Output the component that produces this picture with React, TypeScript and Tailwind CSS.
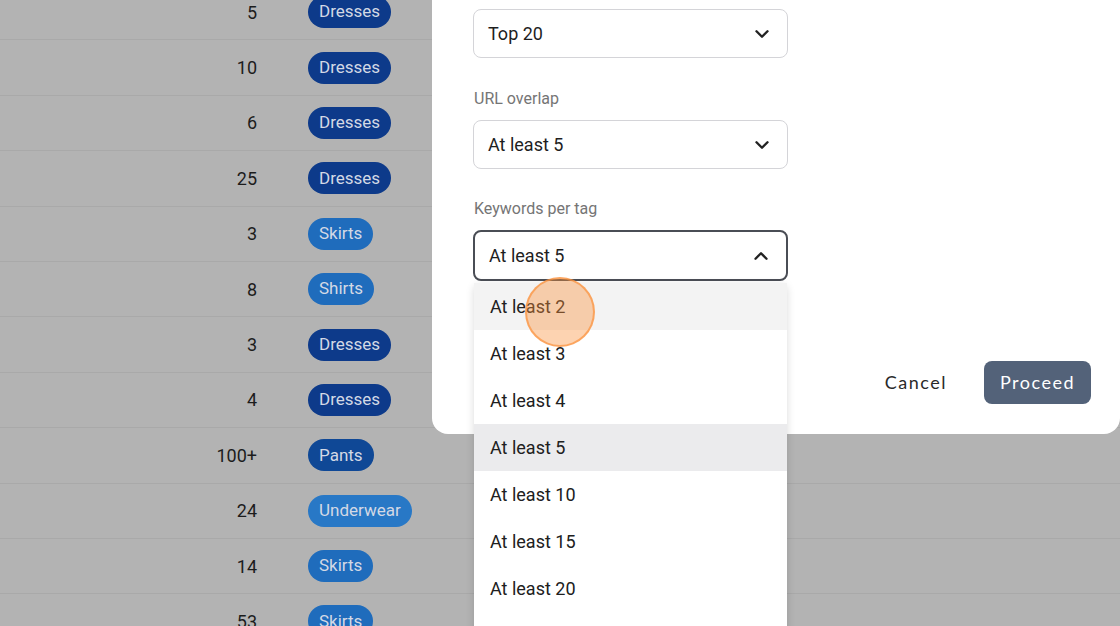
import React from 'react';
import {ChevronDown, ChevronUp} from "lucide-react";

type Row = { count: string, tag: string };

const rows: Row[] = [
    {count: "5", tag: "Dresses"},
    {count: "10", tag: "Dresses"},
    {count: "6", tag: "Dresses"},
    {count: "25", tag: "Dresses"},
    {count: "3", tag: "Skirts"},
    {count: "8", tag: "Shirts"},
    {count: "3", tag: "Dresses"},
    {count: "4", tag: "Dresses"},
    {count: "100+", tag: "Pants"},
    {count: "24", tag: "Underwear"},
    {count: "14", tag: "Skirts"},
    {count: "53", tag: "Skirts"},
];

const options = ["At least 2", "At least 3", "At least 4", "At least 5", "At least 10", "At least 15", "At least 20", "At least 25"];

function tagColor(tag: string) {
    if (tag === "Dresses") return "bg-[#0d3a8a]";
    if (tag === "Pants") return "bg-[#0f4896]";
    if (tag === "Underwear") return "bg-[#2878c6]";
    return "bg-[#1f6cbc]";
}

function SelectBox({value, open}: { value: string, open?: boolean }) {
    return (
        <div
            className={`flex items-center justify-between w-[315px] px-[14px] bg-white rounded-lg ${open ? "h-[51px] border-2 border-[#4a4d55]" : "h-[49px] border border-[#d4d4d8]"}`}
        >
            <span className="text-[18px] text-[#1e1e1e]">{value}</span>
            {open ? (
                <ChevronUp size={22} strokeWidth={2.6} className="text-[#222]"/>
            ) : (
                <ChevronDown size={22} strokeWidth={2.6} className="text-[#222]"/>
            )}
        </div>
    );
}

export default function App() {
    return (
        <div className="relative w-[1120px] h-[626px] overflow-hidden bg-[#b3b3b3] font-['Roboto',sans-serif]">
            {/* table behind the overlay */}
            <div className="-mt-[15px]">
                {rows.map((r, i) => (
                    <div key={i} className="flex items-center h-[55.4px] border-b border-[#a9a9a9]">
                        <span className="w-[257px] text-right text-[18px] text-[#1c1c1c]">{r.count}</span>
                        <span
                            className={`ml-[51px] h-[32px] px-[11px] rounded-full flex items-center text-[17px] text-[#d3d9e5] ${tagColor(r.tag)}`}
                        >
                            {r.tag}
                        </span>
                    </div>
                ))}
            </div>

            {/* modal */}
            <div className="absolute left-[432px] right-0 -top-[40px] h-[474px] bg-white rounded-b-2xl">
                <div className="pt-[49px] pl-[41px] flex flex-col">
                    <SelectBox value="Top 20"/>
                    <span className="mt-[31px] pl-px leading-[20px] text-[16px] text-[#757575]">URL overlap</span>
                    <div className="mt-[11px]">
                        <SelectBox value="At least 5"/>
                    </div>
                    <span className="mt-[30px] pl-px leading-[20px] text-[16px] text-[#757575]">Keywords per tag</span>
                    <div className="mt-[11px]">
                        <SelectBox value="At least 5" open/>
                    </div>
                </div>
                <div className="absolute right-[29px] top-[401px] flex items-center gap-[37px] font-['Lato',sans-serif] tracking-[1.5px]">
                    <button className="text-[18px] text-[#2a2a2a]">Cancel</button>
                    <button className="h-[43px] px-[16px] rounded-lg bg-[#536279] text-white text-[18px]">Proceed</button>
                </div>
            </div>

            {/* dropdown menu */}
            <div className="absolute left-[474px] top-[283px] w-[313px] bg-white rounded-t-md shadow-[0_2px_8px_rgba(0,0,0,0.15)]">
                {options.map((o, i) => (
                    <div
                        key={o}
                        className={`h-[47px] flex items-center px-[16px] text-[18px] text-[#202020] ${i === 0 ? "bg-[#f3f3f3]" : i === 3 ? "bg-[#ebebed]" : ""}`}
                    >
                        {o}
                    </div>
                ))}
            </div>

            {/* click indicator */}
            <div className="absolute left-[525px] top-[277px] w-[70px] h-[70px] rounded-full bg-[#fb923c]/40 border-2 border-[#fb923c]/70"/>
        </div>
    );
}
